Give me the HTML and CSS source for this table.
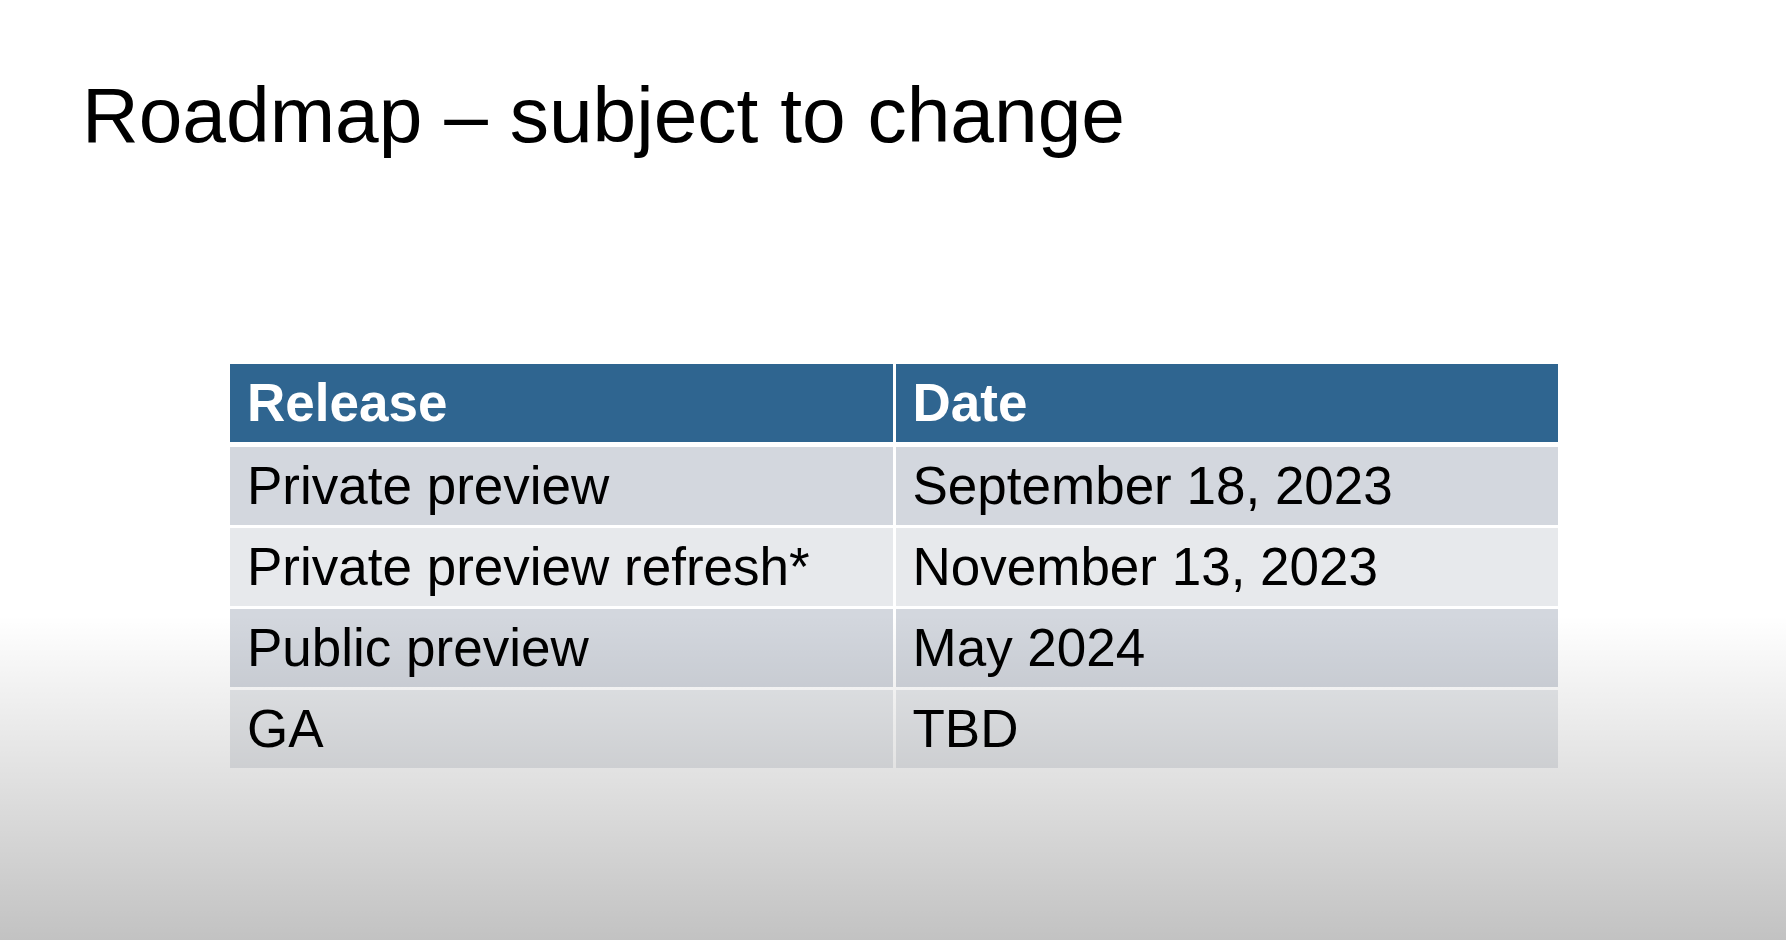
FILE: index.html
```html
<!DOCTYPE html>
<html lang="en">
<head>
<meta charset="utf-8">
<title>Roadmap – subject to change</title>
<link rel="stylesheet" href="styles.css">
</head>
<body>
<main class="slide">
  <h1 class="title">Roadmap – subject to change</h1>
  <table class="roadmap">
    <thead>
      <tr><th>Release</th><th>Date</th></tr>
    </thead>
    <tbody>
      <tr class="odd"><td>Private preview</td><td>September 18, 2023</td></tr>
      <tr class="even"><td>Private preview refresh*</td><td>November 13, 2023</td></tr>
      <tr class="odd"><td>Public preview</td><td>May 2024</td></tr>
      <tr class="even"><td>GA</td><td>TBD</td></tr>
    </tbody>
  </table>
</main>
</body>
</html>
```
FILE: styles.css
```css
html, body {
  margin: 0;
  padding: 0;
  background: #ffffff;
}
body {
  width: 1786px;
  height: 940px;
  overflow: hidden;
  position: relative;
  font-family: "Liberation Sans", Arial, sans-serif;
  color: #000;
}
body::after {
  content: "";
  position: absolute;
  left: 0;
  right: 0;
  top: 0;
  bottom: 0;
  pointer-events: none;
  background: linear-gradient(to bottom, rgba(0,0,0,0) 0px, rgba(0,0,0,0) 615px, rgba(0,0,0,0.24) 940px);
}
.slide {
  display: flex;
  flex-direction: column;
  padding: 67px 0 0 0;
}
.title {
  margin: 0 0 0 82px;
  font-weight: 400;
  font-size: 78.5px;
  line-height: 96px;
  letter-spacing: 0;
}
.roadmap {
  margin: 198px 0 0 227px;
  border-collapse: separate;
  border-spacing: 3px;
  table-layout: fixed;
  width: 1334px;
}
.roadmap th,
.roadmap td {
  height: 78px;
  padding: 0 0 0 17px;
  font-size: 53px;
  line-height: 78px;
  text-align: left;
  vertical-align: middle;
  white-space: nowrap;
}
.roadmap th {
  background: #2f6590;
  color: #ffffff;
  font-weight: 700;
}
.roadmap thead tr th {
  border-bottom: 2px solid #ffffff;
}
.roadmap .odd td {
  background: #d3d7de;
}
.roadmap .even td {
  background: #e7e9ec;
}
```
